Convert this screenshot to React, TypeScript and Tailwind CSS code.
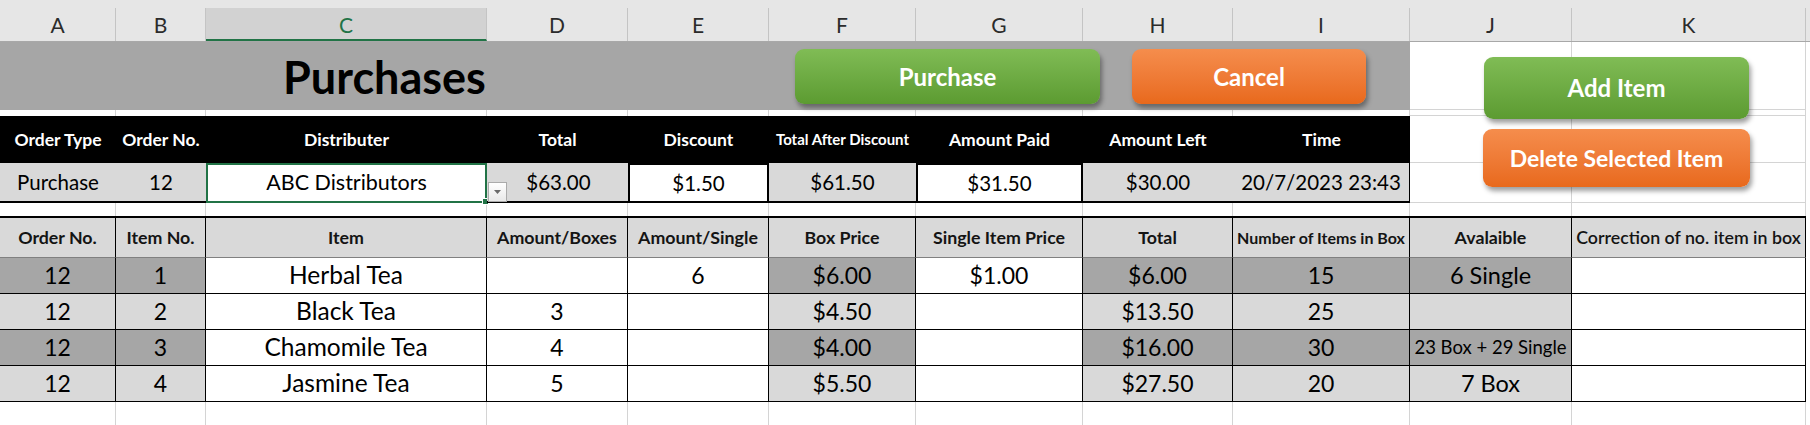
import React from "react";

// Sheet columns A..K plus the sliver of L at the right edge.
const COLS =
  "grid grid-cols-[116px_90px_281px_141px_141px_147px_167px_150px_177px_162px_234px_4px]";

const LETTERS = ["A", "B", "C", "D", "E", "F", "G", "H", "I", "J", "K", ""];

interface ItemRow {
  order: string;
  no: string;
  item: string;
  boxes: string;
  single: string;
  boxPrice: string;
  singlePrice: string;
  total: string;
  perBox: string;
  avail: string;
  small?: boolean;
}

const ITEMS: ItemRow[] = [
  { order: "12", no: "1", item: "Herbal Tea", boxes: "", single: "6", boxPrice: "$6.00", singlePrice: "$1.00", total: "$6.00", perBox: "15", avail: "6 Single" },
  { order: "12", no: "2", item: "Black Tea", boxes: "3", single: "", boxPrice: "$4.50", singlePrice: "", total: "$13.50", perBox: "25", avail: "" },
  { order: "12", no: "3", item: "Chamomile Tea", boxes: "4", single: "", boxPrice: "$4.00", singlePrice: "", total: "$16.00", perBox: "30", avail: "23 Box + 29 Single", small: true },
  { order: "12", no: "4", item: "Jasmine Tea", boxes: "5", single: "", boxPrice: "$5.50", singlePrice: "", total: "$27.50", perBox: "20", avail: "7 Box" },
];

const ORDER_HEADERS = [
  "Order Type",
  "Order No.",
  "Distributer",
  "Total",
  "Discount",
  "Total After Discount",
  "Amount Paid",
  "Amount Left",
  "Time",
];

const ITEM_HEADERS = [
  "Order No.",
  "Item No.",
  "Item",
  "Amount/Boxes",
  "Amount/Single",
  "Box Price",
  "Single Item Price",
  "Total",
  "Number of Items in Box",
  "Avalaible",
  "Correction of no. item in box",
];

function cx(...parts: (string | false | undefined)[]) {
  return parts.filter(Boolean).join(" ");
}

// Plain empty sheet cell with Excel's light gridlines.
function GridCell({ last = false, bottom = false }: { last?: boolean; bottom?: boolean }) {
  return (
    <div
      className={cx(
        !last && "border-r border-[#d4d4d4]",
        bottom && "border-b border-[#d4d4d4]",
      )}
    />
  );
}

function BlankRow({ h }: { h: string }) {
  return (
    <div className={`${COLS} ${h}`}>
      {LETTERS.map((l, i) => (
        <GridCell key={i} last={l === ""} />
      ))}
    </div>
  );
}

function SheetButton({
  label,
  tone,
  className,
}: {
  label: string;
  tone: "green" | "orange";
  className: string;
}) {
  const fill =
    tone === "green"
      ? "bg-linear-to-b from-[#80bc55] to-[#5c9b31]"
      : "bg-linear-to-b from-[#f58d4c] to-[#e8691b]";
  return (
    <div
      className={`absolute flex items-center justify-center rounded-[9px] font-bold text-white shadow-[2px_4px_5px_rgba(0,0,0,0.38)] ${fill} ${className}`}
    >
      {label}
    </div>
  );
}

export default function App() {
  const dark = "bg-[#a6a6a6]";
  const light = "bg-[#d9d9d9]";

  return (
    <div className="relative h-[425px] w-[1810px] overflow-hidden bg-white font-[Lato,'Open_Sans',sans-serif] leading-none text-black">
      {/* column letters */}
      <div className={`${COLS} h-[42px] border-b border-[#a8a8a8] bg-[#e6e6e6] pt-2`}>
        {LETTERS.map((l, i) =>
          l === "C" ? (
            <div
              key={i}
              className="flex items-center justify-center border-r border-b-2 border-r-[#c4c4c4] border-b-[#217346] bg-[#d2d2d2] pt-[2px] text-[21px] text-[#217346]"
            >
              {l}
            </div>
          ) : (
            <div
              key={i}
              className={cx(
                "flex items-center justify-center text-[21px] text-[#2b2b2b]",
                l !== "" && "border-r border-[#c4c4c4]",
              )}
            >
              {l}
            </div>
          ),
        )}
      </div>

      {/* title band */}
      <div className={`${COLS} h-[68px]`}>
        <div className="col-span-9 flex bg-[#a6a6a6]">
          <div className="flex w-[769px] items-center justify-center pt-[2px] text-[45px] font-bold">
            Purchases
          </div>
        </div>
        <GridCell bottom />
        <GridCell bottom />
        <GridCell last />
      </div>

      {/* spacer */}
      <div className={`${COLS} h-[6px]`}>
        {LETTERS.map((l, i) => (
          <GridCell key={i} last={l === ""} bottom={i >= 9 && l !== ""} />
        ))}
      </div>

      {/* order header */}
      <div className={`${COLS} h-[47px]`}>
        {ORDER_HEADERS.map((t) => (
          <div
            key={t}
            className={cx(
              "flex items-center justify-center bg-black font-bold whitespace-nowrap text-white",
              t === "Total After Discount" ? "text-[15px]" : "text-[17.5px]",
            )}
          >
            {t}
          </div>
        ))}
        <GridCell bottom />
        <GridCell bottom />
        <GridCell last />
      </div>

      {/* order row */}
      <div className={`${COLS} h-[40px] text-[20.5px]`}>
        <div className={`flex items-center justify-center border-b-2 border-black ${light}`}>Purchase</div>
        <div className={`flex items-center justify-center border-b-2 border-black ${light}`}>12</div>
        <div className="relative flex items-center justify-center border-2 border-[#217346] bg-white text-[21.5px]">
          ABC Distributors
          <span className="absolute -right-[4px] -bottom-[4px] h-[7px] w-[7px] border border-white bg-[#217346]" />
        </div>
        <div className={`relative flex items-center justify-center border-b-2 border-black ${light}`}>
          <span className="absolute top-[19px] left-[1px] flex h-[20px] w-[19px] items-center justify-center border border-[#ababab] bg-linear-to-b from-[#ffffff] to-[#e9e9e9]">
            <svg width="7" height="4" viewBox="0 0 7 4">
              <path d="M0 0h7L3.5 4z" fill="#6b6b6b" />
            </svg>
          </span>
          <span className="pl-[2px]">$63.00</span>
        </div>
        <div className="flex items-center justify-center border-2 border-black bg-white">$1.50</div>
        <div className={`flex items-center justify-center border-b-2 border-black ${light}`}>$61.50</div>
        <div className="flex items-center justify-center border-2 border-black bg-white">$31.50</div>
        <div className={`flex items-center justify-center border-b-2 border-black ${light}`}>$30.00</div>
        <div className={`flex items-center justify-center border-r border-b-2 border-black ${light}`}>
          20/7/2023 23:43
        </div>
        <GridCell bottom />
        <GridCell bottom />
        <GridCell last />
      </div>

      <BlankRow h="h-[13px]" />

      {/* items table header */}
      <div className={`${COLS} h-[42px]`}>
        {ITEM_HEADERS.map((t) => (
          <div
            key={t}
            className={cx(
              "flex items-center justify-center border-t-2 border-r border-b border-t-black border-r-black border-b-[#808080] bg-[#d9d9d9] whitespace-nowrap text-[#141414]",
              t === "Number of Items in Box"
                ? "text-[16px] font-bold"
                : t === "Correction of no. item in box"
                  ? "text-[17.8px] font-semibold"
                  : "text-[17.8px] font-bold",
            )}
          >
            {t}
          </div>
        ))}
        <GridCell last />
      </div>

      {/* items */}
      {ITEMS.map((r, i) => {
        const alt = i % 2 === 0 ? dark : light;
        const cell = "flex items-center justify-center border-r border-b border-black";
        return (
          <div key={r.no} className={`${COLS} h-[36px] text-[23px]`}>
            <div className={`${cell} ${alt}`}>{r.order}</div>
            <div className={`${cell} ${alt}`}>{r.no}</div>
            <div className={`${cell} bg-white text-[24.5px]`}>{r.item}</div>
            <div className={`${cell} bg-white`}>{r.boxes}</div>
            <div className={`${cell} bg-white`}>{r.single}</div>
            <div className={`${cell} ${alt}`}>{r.boxPrice}</div>
            <div className={`${cell} bg-white`}>{r.singlePrice}</div>
            <div className={`${cell} ${alt}`}>{r.total}</div>
            <div className={`${cell} ${alt}`}>{r.perBox}</div>
            <div className={cx(cell, alt, r.small ? "text-[18.5px]" : "text-[23.5px]")}>{r.avail}</div>
            <div className={`${cell} bg-white`} />
            <GridCell last />
          </div>
        );
      })}

      <BlankRow h="h-[23px]" />

      {/* floating sheet buttons */}
      <SheetButton label="Purchase" tone="green" className="top-[49px] left-[795px] h-[55px] w-[305px] text-[24px]" />
      <SheetButton label="Cancel" tone="orange" className="top-[49px] left-[1132px] h-[55px] w-[234px] text-[24px]" />
      <SheetButton label="Add Item" tone="green" className="top-[57px] left-[1484px] h-[62px] w-[265px] text-[24px]" />
      <SheetButton label="Delete Selected Item" tone="orange" className="top-[129px] left-[1483px] h-[58px] w-[267px] text-[23px]" />
    </div>
  );
}
